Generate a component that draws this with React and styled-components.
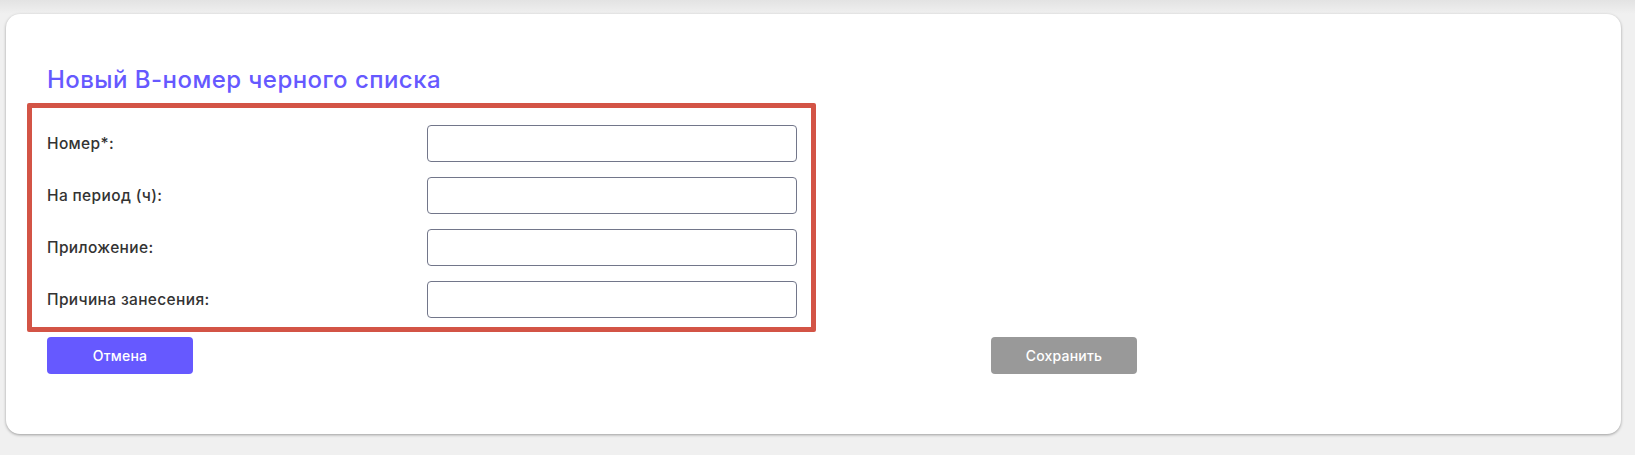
import React from "react";
import styled, { createGlobalStyle } from "styled-components";

const Global = createGlobalStyle`
  html, body { margin: 0; padding: 0; }
  body {
    background: linear-gradient(#e3e3e3 0px, #f0f0f0 14px, #f0f0f0 100%);
    font-family: "Inter", "Open Sans", sans-serif;
    min-height: 455px;
  }
`;

const Page = styled.div`
  padding: 14px 14px 21px 6px;
`;

const Card = styled.div`
  background: #fff;
  border-radius: 14px;
  box-shadow: 0 1px 3px rgba(0, 0, 0, 0.35);
  height: 420px;
  box-sizing: border-box;
  padding: 51px 0 0 21px;
`;

const Title = styled.h2`
  margin: 0 0 8px 20px;
  font-size: 24px;
  line-height: 30px;
  font-weight: 500;
  letter-spacing: 0.45px;
  color: #6659ff;
`;

const FormBox = styled.div`
  width: 789px;
  box-sizing: border-box;
  border: 5px solid #d35446;
  border-radius: 2px;
  padding: 17px 14px 9px 15px;
  display: flex;
  flex-direction: column;
  gap: 15px;
`;

const Row = styled.div`
  display: grid;
  grid-template-columns: 1fr 370px;
  align-items: center;
`;

const Label = styled.label`
  font-size: 15.5px;
  font-weight: 500;
  letter-spacing: 0.35px;
  color: #333;
`;

const Input = styled.input`
  height: 37px;
  box-sizing: border-box;
  border: 1px solid #72768a;
  border-radius: 4px;
  background: #fff;
  padding: 0 10px;
  font: inherit;
  outline: none;
`;

const Actions = styled.div`
  margin: 5px 0 0 20px;
  width: 1090px;
  display: flex;
  justify-content: space-between;
`;

const Button = styled.button`
  width: 146px;
  height: 37px;
  border: none;
  border-radius: 4px;
  background: ${(p) => (p.$variant === "primary" ? "#6659ff" : "#999999")};
  color: #fff;
  font-family: inherit;
  font-size: 14px;
  font-weight: 500;
  letter-spacing: 0.2px;
  cursor: pointer;
`;

const fields = ["Номер*:", "На период (ч):", "Приложение:", "Причина занесения:"];

export default function App() {
  return (
    <>
      <Global />
      <Page>
        <Card>
          <Title>Новый B-номер черного списка</Title>
          <FormBox>
            {fields.map((f) => (
              <Row key={f}>
                <Label>{f}</Label>
                <Input type="text" />
              </Row>
            ))}
          </FormBox>
          <Actions>
            <Button $variant="primary">Отмена</Button>
            <Button>Сохранить</Button>
          </Actions>
        </Card>
      </Page>
    </>
  );
}
